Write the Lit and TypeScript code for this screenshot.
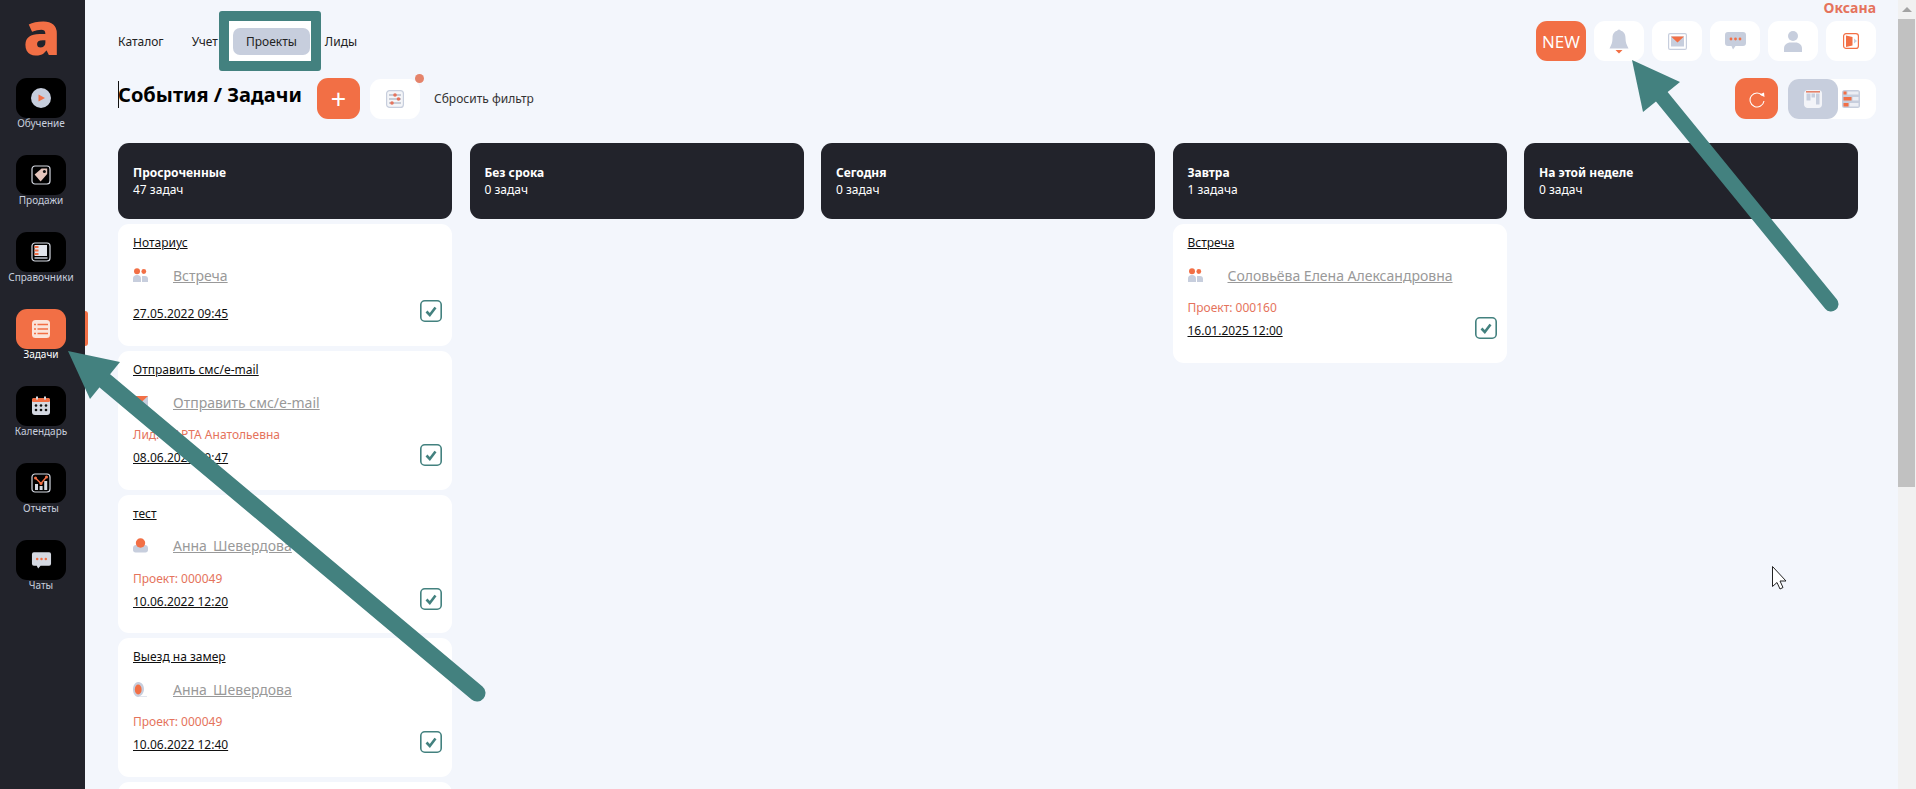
import { LitElement, html, css, svg } from "lit";
import { customElement } from "lit/decorators.js";

const O = "#f26f45";
const G = "#c7cedd";
const frame = svg`<rect x="1" y="1" width="18" height="18" rx="3" fill="none" stroke="#d5d9e2" stroke-width="1.2"/>`;

const navIcons: Record<string, unknown> = {
  play: svg`<circle cx="10" cy="10" r="10" fill="${G}"/><path d="M7.5 6.5 14 10l-6.5 3.5z" fill="${O}"/>`,
  tag: svg`${frame}<path d="M3.6 9.6 10.6 3.6h5.6v5.4l-6.6 7.4z" fill="#e6c6bd"/><circle cx="13.4" cy="6.4" r="1.5" fill="#111"/>`,
  book: svg`${frame}<rect x="3.5" y="3" width="12.5" height="11" fill="#e2e5ec"/><path d="M3.5 5h4M3.5 8.500h4M3.5 12h4" stroke="${O}" stroke-width="1.800"/><path d="M3.5 16h13" stroke="#d5d9e2" stroke-width="1.400"/>`,
  tasks: svg`<rect x="1" y="1" width="18" height="18" rx="3.5" fill="#fbe4da"/><path d="M6.5 5.5H17M6.5 10H17M6.5 14.5H17" stroke="${O}" stroke-width="1.3"/><path d="M3 5.5h2M3 10h2M3 14.5h2" stroke="${O}" stroke-width="1.6"/>`,
  cal: svg`<rect x="1" y="2" width="18" height="17" rx="3" fill="#d5d9e2"/><rect x="1" y="2" width="18" height="4" rx="1.5" fill="${O}"/><rect x="5" y="0.5" width="2" height="3" fill="#d5d9e2"/><rect x="13" y="0.5" width="2" height="3" fill="#d5d9e2"/><g fill="#111"><circle cx="5" cy="9.5" r="1.3"/><circle cx="10" cy="9.5" r="1.3"/><circle cx="15" cy="9.5" r="1.3"/><circle cx="5" cy="14" r="1.3"/><circle cx="10" cy="14" r="1.3"/><circle cx="15" cy="14" r="1.3"/></g>`,
  chart: svg`${frame}<rect x="4" y="11" width="3" height="6" fill="#d5d9e2"/><rect x="8.6" y="13" width="3" height="4" fill="#d5d9e2"/><rect x="13.2" y="8" width="3" height="9" fill="#d5d9e2"/><path d="M4.5 5 10 10.5 15.5 4" fill="none" stroke="${O}" stroke-width="1.5"/><circle cx="4.5" cy="5" r="1.5" fill="${O}"/><circle cx="10" cy="10.5" r="1.5" fill="${O}"/><circle cx="15.5" cy="4" r="1.5" fill="${O}"/>`,
  chat: svg`<path d="M3 2h16a2 2 0 0 1 2 2v10a2 2 0 0 1-2 2h-9l-2.5 3L6 16H3a2 2 0 0 1-2-2V4a2 2 0 0 1 2-2z" fill="#d5d9e2"/><circle cx="6.5" cy="9" r="1.3" fill="${O}"/><circle cx="11" cy="9" r="1.3" fill="${O}"/><circle cx="15.5" cy="9" r="1.3" fill="${O}"/>`,
};

const topIcons: Record<string, unknown> = {
  bell: svg`<svg class="i" width="20" height="25" viewBox="0 0 20 25"><circle cx="10" cy="2.2" r="1.8" fill="${G}"/><path d="M10 1.5c4.4 0 6.500 3.200 6.500 7.500 0 4.500 1 6.500 3 10.500H.5c2-4 3-6 3-10.500 0-4.300 2.100-7.500 6.500-7.500z" fill="${G}"/><path d="M6.500 21h7L10 24.500z" fill="${O}"/></svg>`,
  mail: svg`<svg class="i" width="19" height="17" viewBox="0 0 19 17"><rect x=".6" y=".6" width="17.800" height="15.800" rx="1.500" fill="#fff" stroke="${G}" stroke-width="1.200"/><rect x="3" y="3.500" width="13" height="10" fill="${G}"/><path d="M3 3.500h13L9.500 9.500z" fill="${O}"/></svg>`,
  chat: svg`<svg class="i" width="21" height="18" viewBox="0 0 21 18"><path d="M3 0h15a3 3 0 0 1 3 3v8a3 3 0 0 1-3 3H10.500L8 17.500 6.500 14H3a3 3 0 0 1-3-3V3a3 3 0 0 1 3-3z" fill="${G}"/><circle cx="6" cy="7" r="1.400" fill="${O}"/><circle cx="10.500" cy="7" r="1.400" fill="${O}"/><circle cx="15" cy="7" r="1.400" fill="${O}"/></svg>`,
  user: svg`<svg class="i" width="18" height="21" viewBox="0 0 18 21"><circle cx="9" cy="5" r="5" fill="${G}"/><path d="M0 21v-3.500C0 14 3 11.500 6.500 11.500h5C15 11.500 18 14 18 17.500V21z" fill="${G}"/></svg>`,
  door: svg`<svg class="i" width="16" height="16" viewBox="0 0 16 16"><rect x=".6" y=".6" width="14.800" height="14.800" rx="2.500" fill="#fff" stroke="${O}" stroke-width="1.200"/><path d="M3 2.500 9.500 4v8.500L3 14z" fill="${O}"/><path d="M11 5.500 14 8l-3 2.500z" fill="${G}"/></svg>`,
};

const filterIcon = svg`<svg class="i" width="18" height="18" viewBox="0 0 18 18"><rect x=".6" y=".6" width="16.800" height="16.800" rx="3" fill="#f4f5f8" stroke="${G}" stroke-width="1.200"/><path d="M3 5h12M3 9h12M3 13h12" stroke="#9aa3b5" stroke-width="1"/><circle cx="9" cy="5" r="1.800" fill="#e5735c"/><circle cx="12.500" cy="9" r="1.800" fill="#e5735c"/><circle cx="6" cy="13" r="1.800" fill="#e5735c"/></svg>`;
const refreshIcon = svg`<svg class="i" width="18" height="18" viewBox="0 0 18 18"><path d="M14.500 5.500A7 7 0 1 0 16 11" fill="none" stroke="#fff" stroke-width="1.100"/><path d="M11.500 4.500 16 2.500l.5 4.500z" fill="#fff"/></svg>`;
const boardIcon = svg`<svg class="i" width="18" height="18" viewBox="0 0 18 18"><rect x=".7" y=".7" width="16.600" height="16.600" rx="3" fill="#f3f4f8" stroke="#f3f4f8" stroke-width="1.400"/><rect x="2" y="1" width="14" height="1.600" fill="#e5836a"/><rect x="2.500" y="3.500" width="4" height="7" fill="#c7cedd"/><rect x="7.500" y="3.500" width="3.500" height="4" fill="#c7cedd"/><rect x="12" y="3.500" width="3.500" height="11" fill="#c7cedd"/></svg>`;
const listIcon = svg`<svg class="i" width="18" height="18" viewBox="0 0 18 18"><rect width="18" height="18" rx="2.500" fill="${G}"/><rect x="1.500" y="1.500" width="3" height="3" fill="${O}"/><rect x="5.500" y="1.500" width="11" height="3" fill="#eceef4"/><rect x="1.500" y="7" width="8" height="3.500" fill="${O}"/><rect x="10.500" y="7" width="6" height="3.500" fill="#eceef4"/><rect x="1.500" y="13" width="5" height="3.500" fill="${O}"/><rect x="7.500" y="13" width="9" height="3.500" fill="#eceef4"/></svg>`;

const typeIcons: Record<string, unknown> = {
  meet: svg`<svg width="15" height="15" viewBox="0 0 15 15"><circle cx="4" cy="3.200" r="3" fill="${O}"/><circle cx="10.800" cy="3.500" r="2.400" fill="${O}"/><path d="M0 14v-3.500C0 8.500 1.500 7 4 7s4 1.500 4 3.500V14z" fill="${G}"/><path d="M9 14V8h3c2 0 3 1.200 3 3v3z" fill="${G}"/></svg>`,
  mail: svg`<svg width="15" height="15" viewBox="0 0 15 15"><rect y="1" width="15" height="13" fill="${G}"/><path d="M0 1h15L7.500 8z" fill="${O}"/></svg>`,
  seat: svg`<svg width="15" height="15" viewBox="0 0 15 15"><path d="M0 10c0-2 1.500-3 3-3h9c1.500 0 3 1 3 3v2c0 1.500-1 2.500-2.500 2.500h-10C1 14.500 0 13.500 0 12z" fill="${G}"/><circle cx="7.500" cy="5" r="4.700" fill="${O}"/></svg>`,
  call: svg`<svg width="15" height="15" viewBox="0 0 15 15"><path d="M5 0c3 0 6 2.500 6 7s-3 7.500-6 7.500h9v.5H5C2 15 0 11 0 7.500S2 0 5 0z" fill="${G}"/><ellipse cx="5.200" cy="7.500" rx="3.400" ry="5" fill="${O}"/></svg>`,
};

const checkIcon = html`<svg class="check" width="22" height="22" viewBox="0 0 22 22"><rect x=".8" y=".8" width="20.400" height="20.400" rx="4" fill="#fff" stroke="#43817f" stroke-width="1.600"/><path d="M6.500 11.500 9.800 15l5.700-7.500" fill="none" stroke="#43817f" stroke-width="2.600"/></svg>`;

type Card = { title: string; type: string; link: string; sub?: string; date: string };

const columns: { name: string; count: string; cards: Card[] }[] = [
  {
    name: "Просроченные",
    count: "47 задач",
    cards: [
      { title: "Нотариус", type: "meet", link: "Встреча", date: "27.05.2022 09:45" },
      { title: "Отправить смс/e-mail", type: "mail", link: "Отправить смс/e-mail", sub: "Лид: МАРТА Анатольевна", date: "08.06.2022 09:47" },
      { title: "тест", type: "seat", link: "Анна_Шевердова", sub: "Проект: 000049", date: "10.06.2022 12:20" },
      { title: "Выезд на замер", type: "call", link: "Анна_Шевердова", sub: "Проект: 000049", date: "10.06.2022 12:40" },
    ],
  },
  { name: "Без срока", count: "0 задач", cards: [] },
  { name: "Сегодня", count: "0 задач", cards: [] },
  {
    name: "Завтра",
    count: "1 задача",
    cards: [{ title: "Встреча", type: "meet", link: "Соловьёва Елена Александровна", sub: "Проект: 000160", date: "16.01.2025 12:00" }],
  },
  { name: "На этой неделе", count: "0 задач", cards: [] },
];

const sideItems = [
  { label: "Обучение", icon: "play" },
  { label: "Продажи", icon: "tag" },
  { label: "Справочники", icon: "book" },
  { label: "Задачи", icon: "tasks", active: true },
  { label: "Календарь", icon: "cal" },
  { label: "Отчеты", icon: "chart" },
  { label: "Чаты", icon: "chat" },
];

@customElement("app-root")
export class AppRoot extends LitElement {
  static styles = css`
    :host {
      display: block;
      width: 1916px;
      height: 789px;
      overflow: hidden;
      position: relative;
      font-family: "Noto Sans", "Open Sans", sans-serif;
      font-size: 12px;
      color: #111;
      background: #f3f6fc;
    }
    .shell { display: flex; height: 789px; overflow: hidden; }

    .side { flex: 0 0 85px; background: #22232b; display: flex; flex-direction: column; align-items: flex-start; }
    .logo {
      width: 84px; height: 78px; display: flex; justify-content: center; align-items: flex-start;
      font-family: "Open Sans", sans-serif; font-weight: 800; font-size: 60px; line-height: 64px; color: #f26f45;
    }
    .item { display: flex; flex-direction: column; align-items: center; height: 52px; margin-bottom: 25px; color: #c7cedd; font-size: 10px; line-height: 12px; position: relative; width: 82px; }
    .tile { width: 50px; height: 40px; border-radius: 11px; background: #000; display: flex; align-items: center; justify-content: center; margin-bottom: -1px; }
    .tile svg { width: 20px; height: 20px; display: block; }
    .tile svg.wide { width: 21px; }
    .item.active { color: #fff; }
    .item.active .tile { background: #f26f45; }
    .mark { position: absolute; left: 85px; top: 2px; width: 3px; height: 35px; background: #f26f45; border-radius: 0 3px 3px 0; }

    .main { flex: 1; min-width: 0; padding: 0 22px 0 33px; }
    .user { height: 16px; text-align: right; font-size: 14px; line-height: 16px; font-weight: 700; color: #e5735c; }
    .top { display: flex; align-items: center; justify-content: space-between; height: 40px; margin-top: 5px; }
    .nav { display: flex; gap: 2px; margin-left: -13px; position: relative; }
    .nav a { position: relative; padding: 0 13px; height: 27px; line-height: 27px; border-radius: 7px; color: #222; }
    .nav a.on { background: #c7cedd; }
    .hl { position: absolute; left: 114px; top: -17px; box-sizing: border-box; width: 102px; height: 60px; border: 10px solid #43817f; border-radius: 3px; background: #fff; }
    .btns { display: flex; gap: 8px; }
    .btn { width: 50px; height: 40px; border-radius: 11px; background: #fff; display: flex; align-items: center; justify-content: center; }
    .btn.new { background: #f26f45; color: #fff; font-family: "Open Sans", sans-serif; font-size: 17px; font-weight: 400; }
    .i { display: block; }

    .tools { display: flex; align-items: center; height: 41px; margin-top: 17px; }
    h1 { margin: 0; width: 199px; font-size: 20px; line-height: 27px; font-weight: 700; color: #000; position: relative; top: -4px; }
    h1 b { display: inline-block; width: 1px; height: 27px; background: #111; margin-right: -1px; vertical-align: top; }
    .add, .reload { width: 43px; height: 41px; border-radius: 11px; background: #f26f45; display: flex; align-items: center; justify-content: center; }
    .add { color: #fff; font-size: 27px; line-height: 1; font-weight: 400; margin-right: 10px; }
    .filter { position: relative; margin-right: 14px; }
    .dot { position: absolute; right: -4px; top: -5px; width: 9px; height: 9px; border-radius: 50%; background: #e5836a; }
    .reset { color: #333; }
    .spacer { flex: 1; }
    .reload { margin-right: 10px; }
    .toggle { display: flex; width: 88px; height: 40px; border-radius: 11px; background: #fff; }
    .toggle .on { width: 50px; height: 40px; border-radius: 11px; background: #c7cedd; display: flex; align-items: center; justify-content: center; }
    .toggle .off { flex: 1; display: flex; align-items: center; justify-content: flex-end; padding-right: 16px; }

    .board { display: flex; gap: 17.5px; margin-top: 24px; }
    .col { flex: 0 0 334px; display: flex; flex-direction: column; gap: 5px; }
    .head { height: 76px; box-sizing: border-box; border-radius: 11px; background: #22232b; color: #fff; padding-left: 15px; display: flex; flex-direction: column; justify-content: center; line-height: 17px; }
    .head strong { font-weight: 700; }
    .card { background: #fff; border-radius: 11px; padding: 11px 10px 23.500px 15px; }
    .card.plain { padding-bottom: 24px; }
    .card.blank { height: 60px; padding: 0; }
    .title { line-height: 16px; color: #111; text-decoration: underline; }
    .row { display: flex; align-items: center; gap: 25px; height: 22px; margin-top: 13px; }
    .row svg { display: block; flex: none; }
    .link { font-size: 14px; color: #999; text-decoration: underline; }
    .foot { display: flex; justify-content: space-between; align-items: flex-end; margin-top: 14px; }
    .card.plain .foot { margin-top: 20px; }
    .sub { line-height: 16px; color: #e5735c; margin-bottom: 7px; }
    .date { line-height: 16px; text-decoration: underline; color: #111; }
    .check { display: block; flex: none; margin-top: -6px; }

    .bar { flex: 0 0 18px; background: #f1f1f1; display: flex; flex-direction: column; }
    .up { height: 19px; display: flex; align-items: center; justify-content: center; }
    .up i { width: 0; height: 0; border: 5px solid transparent; border-top: 0; border-bottom: 5px solid #a3a3a3; }
    .thumb { height: 468px; width: 17px; background: #c1c1c1; }

    .overlay { position: absolute; left: 0; top: 0; pointer-events: none; }
  `;

  private side(it: { label: string; icon: string; active?: boolean }) {
    const wide = it.icon === "chat";
    return html`<div class="item ${it.active ? "active" : ""}">
      <div class="tile">
        <svg class=${wide ? "wide" : ""} viewBox=${wide ? "0 0 22 20" : "0 0 20 20"}>${navIcons[it.icon]}</svg>
      </div>
      ${it.label}
      ${it.active ? html`<span class="mark"></span>` : ""}
    </div>`;
  }

  private card(c: Card) {
    return html`<div class="card ${c.sub ? "" : "plain"}">
      <div class="title">${c.title}</div>
      <div class="row">${typeIcons[c.type]}<span class="link">${c.link}</span></div>
      <div class="foot">
        <div>
          ${c.sub ? html`<div class="sub">${c.sub}</div>` : ""}
          <div class="date">${c.date}</div>
        </div>
        ${checkIcon}
      </div>
    </div>`;
  }

  render() {
    return html`
      <div class="shell">
        <aside class="side">
          <div class="logo">a</div>
          ${sideItems.map((s) => this.side(s))}
        </aside>
        <main class="main">
          <div class="user">Оксана</div>
          <div class="top">
            <nav class="nav">
              <span class="hl"></span>
              <a>Каталог</a><a>Учет</a><a class="on">Проекты</a><a>Лиды</a>
            </nav>
            <div class="btns">
              <div class="btn new">NEW</div>
              <div class="btn">${topIcons.bell}</div>
              <div class="btn">${topIcons.mail}</div>
              <div class="btn">${topIcons.chat}</div>
              <div class="btn">${topIcons.user}</div>
              <div class="btn">${topIcons.door}</div>
            </div>
          </div>
          <div class="tools">
            <h1><b></b>События / Задачи</h1>
            <div class="add">+</div>
            <div class="btn filter">${filterIcon}<span class="dot"></span></div>
            <span class="reset">Сбросить фильтр</span>
            <span class="spacer"></span>
            <div class="reload">${refreshIcon}</div>
            <div class="toggle">
              <div class="on">${boardIcon}</div>
              <div class="off">${listIcon}</div>
            </div>
          </div>
          <div class="board">
            ${columns.map(
              (col, i) => html`<section class="col">
                <div class="head"><strong>${col.name}</strong><span>${col.count}</span></div>
                ${col.cards.map((c) => this.card(c))}
                ${i === 0 ? html`<div class="card blank"></div>` : ""}
              </section>`
            )}
          </div>
        </main>
        <div class="bar"><div class="up"><i></i></div><div class="thumb"></div></div>
      </div>
      <svg class="overlay" width="1916" height="789" viewBox="0 0 1916 789">
        <g fill="#43817f" stroke="#43817f">
          <path d="M477 693 105 381" fill="none" stroke-width="17" stroke-linecap="round"/>
          <path d="M68 351 120 362 90 399z" stroke="none"/>
          <path d="M1831 304 1662 97" fill="none" stroke-width="15" stroke-linecap="round"/>
          <path d="M1632 60 1680 82 1643 112z" stroke="none"/>
        </g>
        <path d="M1772.500 566.500v20l4.500-4 3 6.500 3-1.500-3-6.500h6z" fill="#fff" stroke="#222" stroke-width="1"/>
      </svg>
    `;
  }
}
